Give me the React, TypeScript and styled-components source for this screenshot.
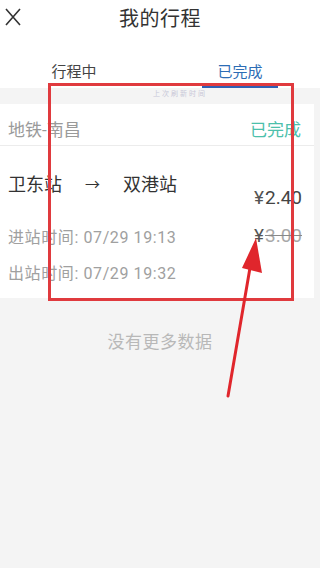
import React from "react";
import styled, { createGlobalStyle } from "styled-components";

const Global = createGlobalStyle`
  html, body { margin: 0; padding: 0; background: #f4f4f4; }
  body { font-family: Roboto, "Noto Sans CJK SC", sans-serif; }
  #root { min-height: 568px; }
`;

const Page = styled.div`
  position: relative;
  width: 320px;
  height: 568px;
  overflow: hidden;
  background: #f4f4f4;
`;

const TopBar = styled.div`
  height: 36px;
  display: flex;
  align-items: center;
  justify-content: center;
  position: relative;
  background: #fff;
`;

const CloseBtn = styled.div`
  position: absolute;
  left: 4px;
  top: 6px;
  width: 18px;
  height: 22px;
`;

const Title = styled.div`
  font-size: 20px;
  color: #333;
  letter-spacing: 0.5px;
  margin-top: -2px;
`;

const Tabs = styled.div`
  display: grid;
  grid-template-columns: 1fr 1fr;
  height: 52px;
  background: #fff;
`;

const Tab = styled.div<{ $active?: boolean; $shift?: number }>`
  position: relative;
  display: flex;
  justify-content: center;
  padding-top: 24px;
  padding-right: ${(p) => (p.$shift ? p.$shift * 2 : 0)}px;
  font-size: 15px;
  color: ${(p) => (p.$active ? "#2d6db5" : "#444")};
  &::after {
    content: "";
    display: ${(p) => (p.$active ? "block" : "none")};
    position: absolute;
    left: 42px;
    right: 42px;
    bottom: 0;
    height: 3px;
    background: #2f5fb4;
  }
`;

const Refresh = styled.div`
  height: 16px;
  display: flex;
  justify-content: center;
  align-items: flex-start;
  font-size: 7px;
  color: #c8c8d8;
  letter-spacing: 2px;
  padding-left: 40px;
`;

const Card = styled.div`
  width: 314px;
  background: #fff;
`;

const CardHead = styled.div`
  height: 42px;
  display: flex;
  justify-content: space-between;
  align-items: center;
  padding: 7px 8px 0 8px;
  box-sizing: border-box;
  border-bottom: 1px solid #ececec;
`;

const Line = styled.div`
  font-size: 17px;
  color: #9a9a9a;
`;

const Status = styled.div`
  font-size: 17px;
  color: #4cc0ab;
  margin-right: 5px;
`;

const CardBody = styled.div`
  padding: 23px 12px 17px 8px;
  display: grid;
  grid-template-columns: 1fr auto;
  grid-template-rows: 28px 12px 54px 18px;
`;

const Route = styled.div`
  grid-column: 1;
  grid-row: 1;
  font-size: 18px;
  color: #333;
  display: flex;
  gap: 23px;
  align-items: center;
`;

const Arrow = styled.span`
  font-size: 15px;
`;

const Price = styled.div<{ $old?: boolean }>`
  grid-column: 2;
  grid-row: ${(p) => (p.$old ? "3" : "1 / 3")};
  font-size: 19px;
  line-height: 22px;
  color: ${(p) => (p.$old ? "#a8a8a8" : "#444")};
  align-self: ${(p) => (p.$old ? "center" : "end")};
  display: flex;
  align-items: center;
  gap: 1px;
`;

const Yen = styled.span`
  color: #555;
`;

const Amount = styled.span<{ $old?: boolean }>`
  text-decoration: ${(p) => (p.$old ? "line-through" : "none")};
  text-decoration-color: #888;
`;

const Time = styled.div<{ $row: number }>`
  grid-column: 1;
  grid-row: ${(p) => p.$row};
  font-size: 16px;
  letter-spacing: 0.6px;
  color: #a0a0a0;
  align-self: center;
`;

const Empty = styled.div`
  text-align: center;
  margin-top: 30px;
  font-size: 17px;
  color: #b8b8b8;
  letter-spacing: 0.5px;
`;

const Overlay = styled.svg`
  position: absolute;
  left: 0;
  top: 0;
  pointer-events: none;
`;

export default function App() {
  return (
    <Page>
      <Global />
      <TopBar>
        <CloseBtn>
          <svg width="18" height="22" viewBox="0 0 18 22">
            <path d="M2 3 L16 19 M16 3 L2 19" stroke="#333" strokeWidth="1.6" fill="none" />
          </svg>
        </CloseBtn>
        <Title>我的行程</Title>
      </TopBar>
      <Tabs>
        <Tab $shift={6}>行程中</Tab>
        <Tab $active>已完成</Tab>
      </Tabs>
      <Refresh>上次刷新时间</Refresh>
      <Card>
        <CardHead>
          <Line>地铁-南昌</Line>
          <Status>已完成</Status>
        </CardHead>
        <CardBody>
          <Route>
            <span>卫东站</span>
            <Arrow>→</Arrow>
            <span>双港站</span>
          </Route>
          <Price>
            <Yen>¥</Yen>
            <Amount>2.40</Amount>
          </Price>
          <Time $row={3}>进站时间: 07/29 19:13</Time>
          <Price $old>
            <Yen>¥</Yen>
            <Amount $old>3.00</Amount>
          </Price>
          <Time $row={4}>出站时间: 07/29 19:32</Time>
        </CardBody>
      </Card>
      <Empty>没有更多数据</Empty>
      <Overlay width="320" height="568" viewBox="0 0 320 568">
        <rect x="49.5" y="84.5" width="243" height="215" fill="none" stroke="#e03a3e" strokeWidth="3" />
        <line x1="228" y1="396" x2="251" y2="262" stroke="#e0262c" strokeWidth="3" strokeLinecap="round" />
        <polygon points="256,238 242,268 262,273" fill="#e0262c" />
      </Overlay>
    </Page>
  );
}
